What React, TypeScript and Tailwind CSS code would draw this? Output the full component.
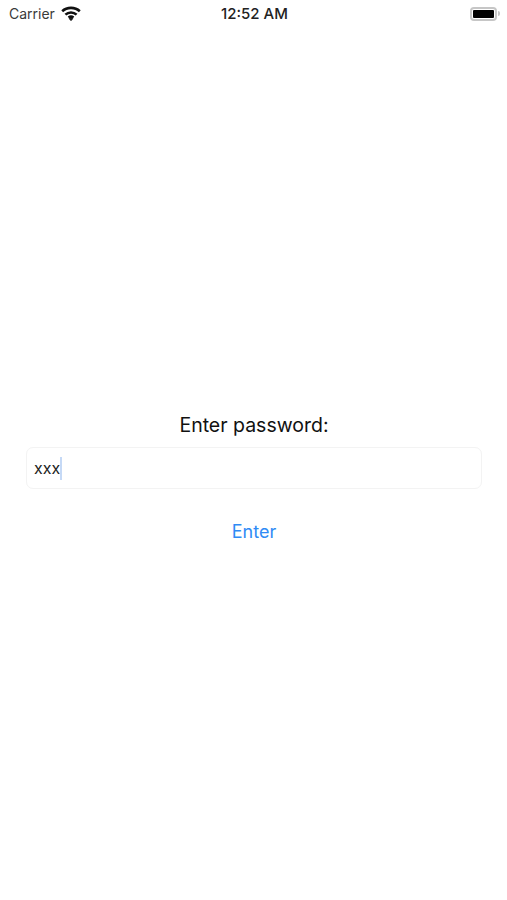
function WifiIcon() {
  return (
    <svg width="20" height="15" viewBox="0 0 20 15" fill="none" stroke="#111" strokeWidth="2.6" className="ml-[6px]">
      <path d="M1.2 5.2C6 .7 14 .7 18.8 5.2" />
      <path d="M4.4 8.6c3.2-2.9 8-2.9 11.2 0" />
      <path d="M7.5 11.6c1.5-1.1 3.5-1.1 5 0" />
      <path d="M10 14.6l-1.6-1.9c1-.6 2.2-.6 3.2 0z" fill="#111" strokeWidth="1" />
    </svg>
  );
}

function Battery() {
  return (
    <div className="flex items-center">
      <div className="h-[14px] w-[27px] rounded-[4px] border-2 border-[#c6c6c6] p-[1px]">
        <div className="h-full w-full rounded-[1px] bg-black" />
      </div>
      <div className="ml-[1px] h-[5px] w-[2px] rounded-r-full bg-[#c6c6c6]" />
    </div>
  );
}

export default function App() {
  return (
    <div className="flex h-[900px] w-full flex-col bg-white font-['Inter','Liberation_Sans',sans-serif] text-black">
      {/* status bar */}
      <div className="grid h-[27px] grid-cols-3 items-center pl-[9px] pr-[7px]">
        <div className="flex items-center text-[14px] text-[#3a3a3a]">
          Carrier
          <WifiIcon />
        </div>
        <div className="pt-[1px] text-center text-[15px] font-medium text-[#222]">12:52 AM</div>
        <div className="flex justify-end">
          <Battery />
        </div>
      </div>

      {/* form */}
      <div className="mt-[384px] pl-[26px] pr-[25px]">
        <p className="text-center text-[19.5px] leading-[28px] text-[#111]">Enter password:</p>
        <div className="mt-[8px] flex h-[42px] items-center rounded-[7px] border border-[#f3f3f3] pl-[7px]">
          <span className="text-[16px] text-[#222]">xxx</span>
          <span className="h-[23px] w-[2px] bg-[#c5d9f6]" />
        </div>
        <div className="mt-[30px] text-center text-[18px] leading-[26px] text-[#2f8bf5]">Enter</div>
      </div>
    </div>
  );
}
